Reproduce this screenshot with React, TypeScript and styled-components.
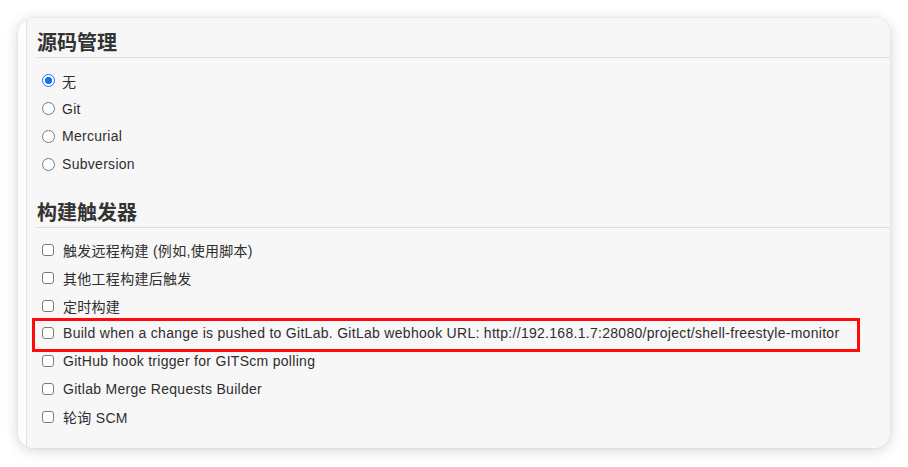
import React from "react";
import styled, { createGlobalStyle } from "styled-components";

const Global = createGlobalStyle`
  html, body { margin: 0; padding: 0; background: #ffffff; }
  body { font-family: "Liberation Sans", "Noto Sans CJK SC", sans-serif; color: #333; }
`;

const Page = styled.div`
  padding: 18px 18px 19px 18px;
  width: 908px;
  box-sizing: border-box;
`;

const Card = styled.div`
  display: flex;
  width: 872px;
  border-radius: 16px;
  overflow: hidden;
  background: #fdfdfd;
  box-shadow: 0 2px 14px rgba(0, 0, 0, 0.18), 0 0 2px rgba(0, 0, 0, 0.08);
`;

const Strip = styled.div`
  width: 8px;
  flex: none;
  background: #fdfdfd;
`;

const Content = styled.div`
  flex: 1;
  background: #f7f7f7;
  border-left: 1px solid #e2e2e2;
  padding: 11px 0 17px 10px;
`;

const Heading = styled.h2<{ $gap?: number }>`
  margin: ${(p) => p.$gap ?? 0}px 0 0 0;
  font-family: "Liberation Sans", "Noto Sans CJK SC", sans-serif;
  font-size: 20px;
  font-weight: 600;
  line-height: 28px;
  color: #333;
  border-bottom: 1px solid #dedede;
`;

const List = styled.div<{ $top: number }>`
  display: flex;
  flex-direction: column;
  margin-top: ${(p) => p.$top}px;
`;

const Row = styled.label`
  position: relative;
  display: flex;
  align-items: center;
  height: 27.8px;
  font-size: 14px;
  letter-spacing: 0.29px;
  color: #2e2e2e;
  white-space: nowrap;
`;

const Radio = styled.input.attrs({ type: "radio" })`
  appearance: none;
  -webkit-appearance: none;
  box-sizing: border-box;
  width: 13px;
  height: 13px;
  margin: 0 7px 0 5px;
  border-radius: 50%;
  border: 1px solid #7a7a7a;
  background: #fff;
  flex: none;
  &:checked {
    border: 1.5px solid #1f6ff2;
    background: radial-gradient(circle, #1f6ff2 0 3.4px, #fff 3.9px);
  }
`;

const Check = styled.input.attrs({ type: "checkbox" })`
  appearance: none;
  -webkit-appearance: none;
  box-sizing: border-box;
  width: 12px;
  height: 12px;
  margin: 0 9px 0 5px;
  border-radius: 3px;
  border: 1px solid #7c7c7c;
  background: #fff;
  flex: none;
`;

const Highlight = styled.div`
  position: absolute;
  left: -5px;
  top: -2px;
  width: 828px;
  height: 34px;
  box-sizing: border-box;
  border: 3px solid #ff0a0a;
  pointer-events: none;
`;

const radios = ["无", "Git", "Mercurial", "Subversion"];
const triggers = [
  "触发远程构建 (例如,使用脚本)",
  "其他工程构建后触发",
  "定时构建",
  "Build when a change is pushed to GitLab. GitLab webhook URL: http://192.168.1.7:28080/project/shell-freestyle-monitor",
  "GitHub hook trigger for GITScm polling",
  "Gitlab Merge Requests Builder",
  "轮询 SCM",
];

export default function App() {
  return (
    <>
      <Global />
      <Page>
        <Card>
          <Strip />
          <Content>
            <Heading>源码管理</Heading>
            <List $top={9}>
              {radios.map((r, i) => (
                <Row key={r}>
                  <Radio name="scm" defaultChecked={i === 0} />
                  {r}
                </Row>
              ))}
            </List>
            <Heading $gap={21}>构建触发器</Heading>
            <List $top={8}>
              {triggers.map((t, i) => (
                <Row key={t}>
                  <Check />
                  {t}
                  {i === 3 && <Highlight />}
                </Row>
              ))}
            </List>
          </Content>
        </Card>
      </Page>
    </>
  );
}
